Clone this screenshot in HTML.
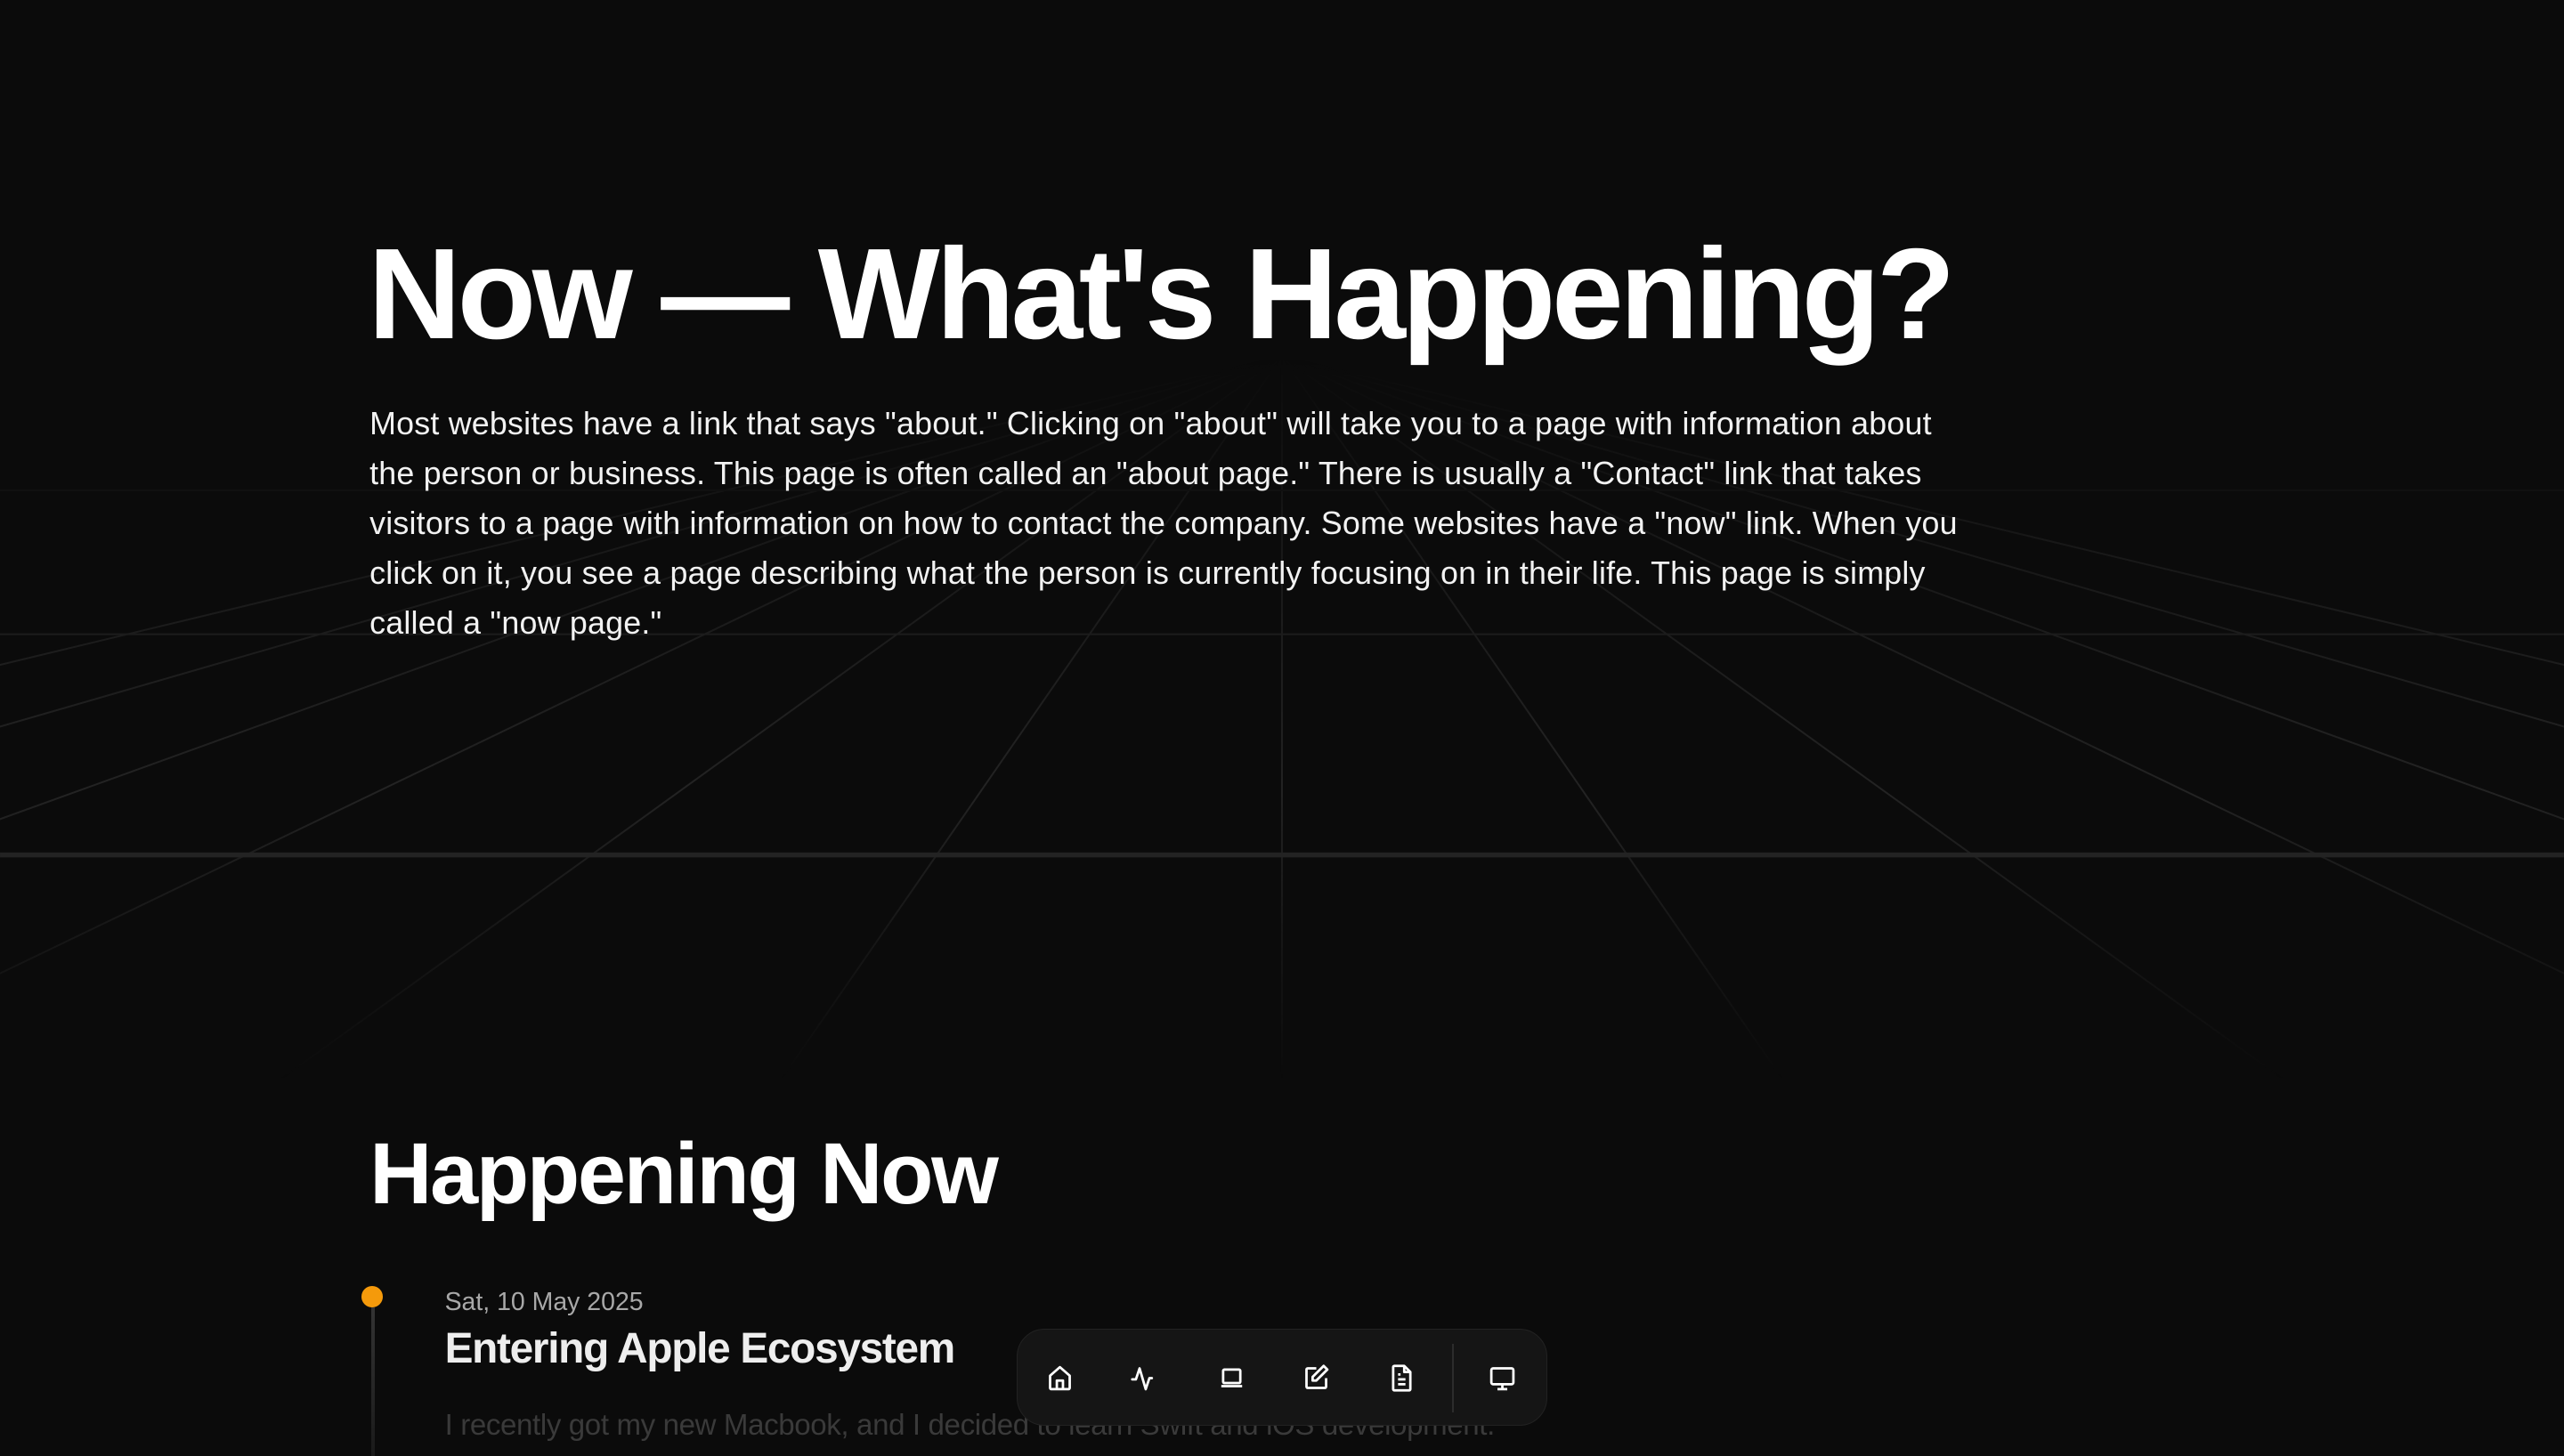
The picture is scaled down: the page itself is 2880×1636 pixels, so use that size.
<!DOCTYPE html>
<html><head><meta charset="utf-8"><style>
html,body{margin:0;padding:0;background:#0b0b0b;overflow:hidden}
#w{zoom:1.8367;width:1568px;height:891px;position:relative;overflow:hidden;font-family:"Liberation Sans",Arial,sans-serif;color:#fff}
.abs{position:absolute;white-space:nowrap}
h1{position:absolute;left:225px;top:130px;margin:0;font-size:79px;font-weight:700;letter-spacing:-2.4px;line-height:100px}
.p{position:absolute;left:226px;top:244px;font-size:19.5px;line-height:30.5px;color:#f2f2f2;white-space:nowrap;letter-spacing:0.12px}
h2{position:absolute;left:226px;top:686px;margin:0;font-size:53px;font-weight:700;letter-spacing:-1.3px;line-height:64px}
.dock{position:absolute;left:622px;top:813px;width:324px;height:59px;border-radius:17px;background:#151515;border:1px solid #222;box-sizing:border-box}
.ic{position:absolute;top:834px;width:18px;height:18px}
</style></head><body><div id="w">
<svg class="abs" style="left:0;top:0" width="1568" height="891" viewBox="0 0 1568 891">
<defs><linearGradient id="g" x1="0" y1="0" x2="0" y2="1"><stop offset="0" stop-color="#fff" stop-opacity="0"/><stop offset="0.25" stop-color="#fff" stop-opacity="0.5"/><stop offset="0.6" stop-color="#fff" stop-opacity="0.9"/><stop offset="1" stop-color="#fff" stop-opacity="0"/></linearGradient>
<mask id="m"><rect x="0" y="220" width="1568" height="440" fill="url(#g)"/></mask></defs>
<g mask="url(#m)" stroke="#262626" stroke-width="1.1">
<line x1="784" y1="218" x2="784" y2="660"/>
<line x1="784" y1="218" x2="478" y2="660"/><line x1="784" y1="218" x2="1090" y2="660"/>
<line x1="784" y1="218" x2="172" y2="660"/><line x1="784" y1="218" x2="1396" y2="660"/>
<line x1="784" y1="218" x2="-134" y2="660"/><line x1="784" y1="218" x2="1702" y2="660"/>
<line x1="784" y1="218" x2="-440" y2="660"/><line x1="784" y1="218" x2="2008" y2="660"/>
<line x1="784" y1="218" x2="-746" y2="660"/><line x1="784" y1="218" x2="2314" y2="660"/>
<line x1="784" y1="218" x2="-1052" y2="660"/><line x1="784" y1="218" x2="2620" y2="660"/>
<line x1="0" y1="388" x2="1568" y2="388"/>
<line x1="0" y1="523" x2="1568" y2="523" stroke="#2e2e2e" stroke-width="3"/>
<line x1="0" y1="300" x2="1568" y2="300" stroke="#1a1a1a"/>
</g></svg>
<h1>Now — What's Happening?</h1>
<div class="p">Most websites have a link that says "about." Clicking on "about" will take you to a page with information about<br>the person or business. This page is often called an "about page." There is usually a "Contact" link that takes<br>visitors to a page with information on how to contact the company. Some websites have a "now" link. When you<br>click on it, you see a page describing what the person is currently focusing on in their life. This page is simply<br>called a "now page."</div>
<h2>Happening Now</h2>
<div class="abs" style="left:221px;top:787px;width:13px;height:13px;border-radius:50%;background:#f59a0b"></div>
<div class="abs" style="left:227px;top:800px;width:2px;height:91px;background:linear-gradient(#333,#1a1a1a)"></div>
<div class="abs" style="left:272px;top:788px;font-size:15.5px;color:#a8a8a8">Sat, 10 May 2025</div>
<div class="abs" style="left:272px;top:810px;font-size:26px;font-weight:700;color:#eee;letter-spacing:-0.7px">Entering Apple Ecosystem</div>
<div class="abs" style="left:272px;top:862px;font-size:18px;color:#3a3a3a;letter-spacing:-0.2px">I recently got my new Macbook, and I decided to learn Swift and iOS development.</div>
<div class="dock"></div>
<svg class="ic" style="left:639px" viewBox="0 0 24 24" fill="none" stroke="#fff" stroke-width="2" stroke-linejoin="round"><path d="M4 10l8-7 8 7v10a1 1 0 0 1-1 1H5a1 1 0 0 1-1-1z"/><path d="M9.5 21v-7h5v7"/></svg>
<svg class="ic" style="left:691px" viewBox="0 0 24 24" fill="none" stroke="#fff" stroke-width="2" stroke-linecap="round" stroke-linejoin="round"><path d="M2 13h3l3-9 5 17 3-9h2"/></svg>
<svg class="ic" style="left:744px" viewBox="0 0 24 24" fill="none" stroke="#fff" stroke-width="2" stroke-linejoin="round"><rect x="5" y="5" width="14" height="11" rx="1"/><path d="M3.5 18.5h17"/></svg>
<svg class="ic" style="left:796px" viewBox="0 0 24 24" fill="none" stroke="#fff" stroke-width="2" stroke-linejoin="round"><path d="M12 4H5a1 1 0 0 0-1 1v14a1 1 0 0 0 1 1h14a1 1 0 0 0 1-1v-7"/><path d="M18 2l3 3-9 9H9v-3z"/></svg>
<svg class="ic" style="left:848px" viewBox="0 0 24 24" fill="none" stroke="#fff" stroke-width="2" stroke-linejoin="round"><path d="M14 2H6a1 1 0 0 0-1 1v18a1 1 0 0 0 1 1h12a1 1 0 0 0 1-1V7z"/><path d="M14 2v5h5M9 9h2M9 13h6M9 17h6"/></svg>
<div class="abs" style="left:888px;top:822px;width:1px;height:42px;background:#2c2c2c"></div>
<svg class="ic" style="left:910px" viewBox="0 0 24 24" fill="none" stroke="#fff" stroke-width="2" stroke-linejoin="round"><rect x="3" y="4" width="18" height="13" rx="1.5"/><path d="M12 17v4M8 21h8"/></svg>
</div></body></html>
